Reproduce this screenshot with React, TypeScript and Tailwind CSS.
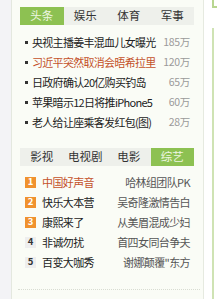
import React from 'react'

const news = [
  { title: '央视主播姜丰混血儿女曝光', count: '185万', hot: false },
  { title: '习近平突然取消会晤希拉里', count: '120万', hot: true },
  { title: '日政府确认20亿购买钓岛', count: '65万', hot: false },
  { title: '苹果暗示12日将推iPhone5', count: '60万', hot: false },
  { title: '老人给让座乘客发红包(图)', count: '28万', hot: false },
]

const shows = [
  { name: '中国好声音', desc: '哈林组团队PK' },
  { name: '快乐大本营', desc: '吴奇隆激情告白' },
  { name: '康熙来了', desc: '从美眉混成少妇' },
  { name: '非诚勿扰', desc: '首四女同台争夫' },
  { name: '百变大咖秀', desc: '谢娜颠覆"东方' },
]

function Tabs({ items, active }: { items: string[]; active: number }) {
  return (
    <div className="flex w-[174px] h-[18px] bg-[#eef0eb] text-[11.5px]">
      {items.map((t, i) => (
        <div
          key={t}
          className={
            i === active
              ? 'flex-1 flex items-center justify-center bg-[#8dc152] text-[#eef7e2]'
              : 'flex-1 flex items-center justify-center text-[#333]'
          }
        >
          {t}
        </div>
      ))}
    </div>
  )
}

export default function App() {
  return (
    <div
      className="flex w-[217px] h-[299px] bg-white text-[11px] leading-none overflow-hidden whitespace-nowrap"
      style={{ fontFamily: '"Noto Sans CJK SC", "Noto Sans", sans-serif' }}
    >
      {/* left strip */}
      <div className="w-[12px] bg-[#f3f3f6] border-r border-[#e4e8df]" />

      {/* main panel */}
      <div className="w-[192px] bg-[#fafcf6] border-r border-[#e6eae0] pl-[8px] pt-[7px]">
        <Tabs items={['头条', '娱乐', '体育', '军事']} active={0} />

        <div className="mt-[7px]">
          {news.map((n) => (
            <div key={n.title} className="flex items-center h-[20px] pl-[5px] w-[170px]">
              <span className="w-[3px] h-[3px] bg-[#333] mr-[4px]" />
              <span className={n.hot ? 'flex-1 text-[#c4522a] tracking-[-0.7px]' : 'flex-1 text-[#222] tracking-[-0.7px]'}>
                {n.title}
              </span>
              <span className="text-[10.5px] text-[#9a9a9a] tracking-[-0.3px]">{n.count}</span>
            </div>
          ))}
        </div>

        <div className="mt-[16px]">
          <Tabs items={['影视', '电视剧', '电影', '综艺']} active={3} />
        </div>

        <div className="mt-[6px]">
          {shows.map((s, i) => (
            <div key={s.name} className="flex items-center h-[20px] pl-[5px] w-[170px]">
              <span
                className={
                  i < 3
                    ? 'w-[11px] h-[11px] flex items-center justify-center bg-[#f0922e] text-white text-[9.5px] font-bold mr-[6px]'
                    : 'w-[11px] h-[11px] flex items-center justify-center bg-[#eeeeee] text-[#333] text-[9.5px] font-bold mr-[6px]'
                }
              >
                {i + 1}
              </span>
              <span className={i === 0 ? 'flex-1 text-[#c4522a] tracking-[-0.6px]' : 'flex-1 text-[#222] tracking-[-0.6px]'}>
                {s.name}
              </span>
              <span className="text-[#555] tracking-[-0.6px]">{s.desc}</span>
            </div>
          ))}
        </div>

        <div className="mt-[17px] w-[182px] -ml-[2px] border-t border-dotted border-[#d8dcd2]" />
      </div>

      {/* right edge */}
      <div className="w-[8px]" />
      <div className="flex flex-col w-[5px]">
        <div className="h-[8px] border-l-2 border-b-2 border-[#b8d690]" />
        <div className="h-[20px]" />
        <div className="flex-1 border-l-2 border-[#cfe3b4]" />
      </div>
    </div>
  )
}
